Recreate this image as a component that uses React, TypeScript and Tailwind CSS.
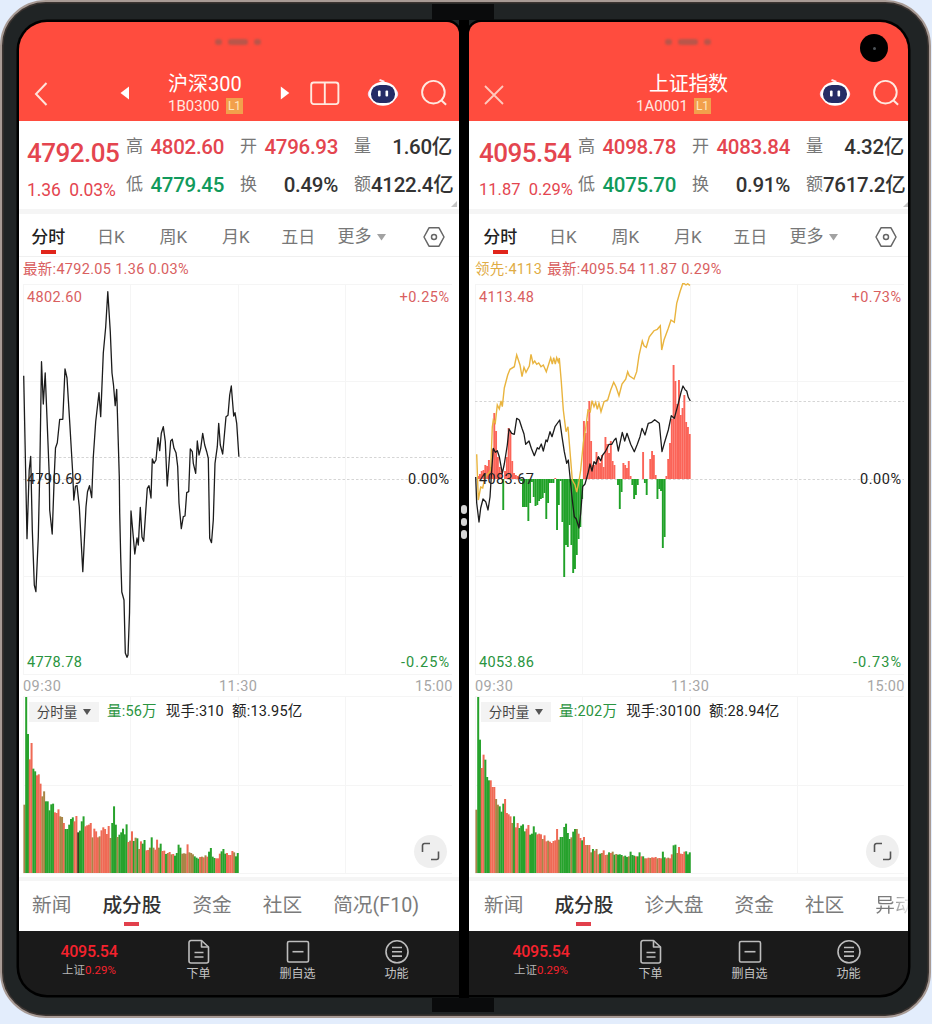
import type { FC, ReactNode } from "react";
import clsx from "clsx";

type Quote = {
  price: string;
  change: string;
  high: string;
  low: string;
  open: string;
  turnover: string;
  volume: string;
  amount: string;
};

type Series = {
  top: string;
  mid: string;
  bottom: string;
  percent: string;
  lastY: number;
  price: string;
  lead?: string;
  bars?: number[];
};

type Volume = { heights: number[]; colors: string };

// all chart data share one x axis: 24 (09:30) .. 452 (15:00)
const START_X = 23.4;
const STEP = 1.793;
const ZERO_Y = 479;

const csi: Series = {
  top: "4802.60",
  mid: "4790.69",
  bottom: "4778.78",
  percent: "0.25%",
  lastY: 457,
  price:
    "23.7,375.7 27,538.7 29.2,470 30.7,456.5 32.3,530 34.3,585 35.9,591.7 38.3,537 39.8,470 41.5,361.7 43.3,404 45.2,373 49.3,476 49.7,510 52.2,534 54.5,470 55.5,448 57.3,442.7 59.7,419.3 62.8,419.3 65,369 67,378 70,427 72.7,473 73.8,500 75.5,486 77,485.5 79.3,506.7 82.8,571.7 86,506.7 87.5,491.7 89.5,485.7 91.7,497.7 93.3,457 95.7,421.7 99,392.7 100.7,416.7 103.3,353 105.7,327 107.8,291.7 110.3,332 112,373 113.5,385 115.2,405.7 116.7,389.3 119.3,477 119.7,513 120.7,557 121.8,592 124,600 125.3,653 127,657.3 128,655 129.5,613 131,511 134.8,554 137,538 138.3,545 140.3,507.3 142,537 143.7,541.3 147.3,488.3 149,485.7 151,498 152.3,459 154,463.3 156,460 158,437.7 159.7,450.7 161.3,433.3 163.3,426.7 165.3,441.7 167.2,486 170.7,441 172.3,439.3 174,448.3 176,452.7 177.7,466.7 179,503 181.3,528.7 183.3,516.7 185,516 186.7,492.7 188.7,491.7 190.3,449 192.3,451.7 193.3,463.3 195.7,473.3 197.3,441 199,455 200.7,448.3 202.7,433.3 204.7,445 206.7,451.7 208.3,458.3 209.7,538.3 211.5,542.7 213.3,520 215,463.3 217.3,446.7 218.7,423.3 220.3,445 222.7,454 226,416.7 228,415.3 229.7,395 231.3,386 233.7,416 235,412.7 236.7,423.3 238.9,456.7",
};

const sse: Series = {
  top: "4113.48",
  mid: "4083.67",
  bottom: "4053.86",
  percent: "0.73%",
  lastY: 401,
  price:
    "23.7,477 24.7,503 27,522 28.7,508 31,499 33.7,501.7 36,510 38,497 39.7,470 41.3,448.3 43.3,452.3 45.3,450.7 47.3,456.7 50.3,473.3 52.3,464 55.3,445 57,429 59.7,433.3 62.3,434.3 64.7,418.3 67.3,420 70,428.3 72,434 73.7,444.3 77,441 79.3,448.3 82.3,455.7 85.3,447.7 87,449 89.3,444 91.3,451 94,440 95.3,441.7 98,431.7 100,436.7 103,426.7 107.7,420 110,436.7 112.3,451.7 114.7,463.3 116.3,460 118.3,480 120.3,500 122.3,516.7 124.3,519 127,528 128.7,513.3 130.7,486.7 133,484 136,473.3 138,464 140,471 142,461.7 144,464 146.3,456.7 148.7,460.7 150.7,455 153.3,451.7 157,444.3 159.7,444.3 162.3,440 164,438.3 166.3,451 170.3,432.3 172.7,441 175,433.3 178.7,444.3 182.3,451.7 185.3,444.3 188,436.7 190,428.3 193,435 196.3,423.3 199.7,422.3 202.7,419.7 207.3,423.3 210,451.7 212.3,443.3 216.3,430 219.3,415.7 222.3,418.3 226.3,403.3 229,392.3 231,386 233.3,390 234.7,391 236.3,397.3 238.3,401",
  lead: "24.7,454.3 26.3,500 28.7,487 30.7,488 33,477 36.7,473 38.7,470 40.3,427 41.3,420 43.3,423 45.3,405 47.3,409 49,401 50.3,406.7 52.3,388 55.7,375 58,369.3 62.3,366.7 64.7,355 68,365 70,376.7 72,367.3 74,372.3 77.3,366 79,354.3 81,363.3 82.7,361 84.7,364.3 86.7,363 89,366.7 91.3,365 94.3,371.7 98.7,357.7 100.3,364 101.7,357.7 103.3,364 104.7,357.7 106.3,362 107.3,358 109.3,381.7 111.3,410 114,431.7 116,426.7 118.7,460 120.3,480 123,485 124.7,492 126.7,483 128.7,470 131.3,443 133.7,428 136,410 138.3,411.7 140,400.7 142,406.7 143.7,402.3 145.3,409.3 147,403.3 149,411.7 152,401.7 155.7,400 158.7,390 161.7,382.3 164,386.7 167,395.7 170,384 173.7,379.3 175.7,371.7 177.3,375.7 182,379 184.7,371.7 187,355.7 190.3,341 192,345.7 194.3,347.3 197.3,336.7 202,330.7 205.3,329.3 208.3,325.7 209.7,350 212,340 216.3,328.3 219,320 222.3,322.3 224.7,303.3 228,291.7 230.7,283.8 232.3,283.8 234,285 235.7,283.8 238,285.3",
  bars: [
    0, 3, 5, 8, 9, 14, 13, 19, 12, 30, 66, 48, 22, 12, 8, -31, 8, 22, 51, 47,
    18, 6, 4, 3, 2, -2, -28, -28, -28, -42, -24, -3, -18, -27, -26, -22, -20,
    -19, -14, -40, -24, -4, -4, -4, 1, -51, -26, -2, -43, -98, -66, -68, -46,
    -66, -94, -90, -76, -60, -48, -20, 58, 46, 58, 78, 38, 14, 14, 27, 22, 16,
    24, 12, 42, 35, 26, 38, 18, 14, 0, -6, -30, -13, 16, 14, 11, 18, 3, -6,
    -20, -16, -6, 0, 0, 27, -4, -16, 0, 20, 28, 24, 4, -20, -10, -12, -69, -58,
    3, 20, 36, 60, 114, 98, 75, 99, 64, 71, 84, 57, 52, 45,
  ],
};

const csiVolume: Volume = {
  heights: [
    205, 530, 417, 341, 390, 313, 305, 293, 296, 268, 230, 245, 215, 215, 188,
    206, 208, 182, 180, 191, 170, 168, 150, 132, 132, 145, 162, 167, 155, 171,
    122, 127, 155, 170, 140, 143, 145, 150, 107, 133, 125, 107, 110, 128, 137,
    132, 117, 141, 105, 150, 200, 145, 108, 115, 122, 133, 116, 146, 93, 97,
    125, 96, 106, 104, 72, 95, 88, 99, 68, 69, 76, 107, 76, 70, 100, 76, 88,
    66, 67, 57, 60, 63, 56, 57, 52, 60, 85, 76, 58, 59, 58, 86, 62, 60, 56, 50,
    46, 43, 48, 49, 47, 53, 49, 64, 75, 49, 45, 44, 44, 58, 65, 72, 58, 60, 54,
    54, 66, 62, 50, 60,
  ],
  colors:
    "oggrrggrrroogggggrrroorgggggrrkgggrrrrorrrorrrrrogggogggggro" +
    "rgogorggrrogorrogrrgororggggooorooogggrororggggrrrgggrrrrogg" +
    "g",
};

const sseVolume: Volume = {
  heights: [
    190, 530, 400, 315, 355, 340, 288, 278, 278, 258, 258, 222, 205, 200, 184,
    208, 222, 180, 176, 170, 150, 170, 137, 150, 135, 142, 146, 125, 133, 144,
    115, 118, 140, 122, 116, 118, 116, 102, 113, 95, 97, 94, 90, 96, 98, 132,
    100, 108, 108, 138, 148, 120, 102, 107, 124, 132, 132, 118, 105, 98, 108,
    84, 84, 84, 62, 72, 67, 72, 56, 58, 60, 68, 54, 55, 62, 60, 64, 55, 57, 55,
    56, 54, 50, 52, 48, 50, 64, 54, 52, 50, 50, 62, 50, 50, 44, 44, 46, 45, 47,
    46, 48, 44, 45, 44, 64, 47, 44, 46, 44, 56, 83, 85, 60, 78, 58, 57, 64, 65,
    56, 62,
  ],
  colors:
    "oggrrgggrrroogggrrrrogrrggggrrggggrrrorrorrrrroggggggoggorrg" +
    "rrorogrorgorrogrogogggoggogggrggrgorrorrrorrggrorrggorrrrggg" +
    "g",
};

const barColors: Record<string, string> = {
  r: "#ef6a55",
  g: "#27a22c",
  o: "#a98547",
  k: "#38401f",
};

const csiQuote: Quote = {
  price: "4792.05",
  change: "1.36  0.03%",
  high: "4802.60",
  low: "4779.45",
  open: "4796.93",
  turnover: "0.49%",
  volume: "1.60亿",
  amount: "4122.4亿",
};

const sseQuote: Quote = {
  price: "4095.54",
  change: "11.87  0.29%",
  high: "4098.78",
  low: "4075.70",
  open: "4083.84",
  turnover: "0.91%",
  volume: "4.32亿",
  amount: "7617.2亿",
};

const RobotIcon = () => (
  <svg width="32" height="32" viewBox="0 0 32 32" fill="none">
    <path d="M12.500 2.800 16.500 4.500V7" stroke="#ffe4ea" strokeWidth="2" />
    <ellipse cx="16" cy="17" rx="15.200" ry="8.500" fill="#f3d3ea" />
    <ellipse cx="16" cy="16.800" rx="14" ry="12" fill="#fff" />
    <rect x="4" y="8" width="24" height="18" rx="8.800" fill="#252c66" />
    <rect x="11" y="13.500" width="2.600" height="6" rx="1" fill="#fff" />
    <rect x="18.500" y="13.500" width="2.600" height="6" rx="1" fill="#fff" />
  </svg>
);

const SearchIcon = () => (
  <svg width="28" height="28" viewBox="0 0 28 28" fill="none">
    <circle cx="13.4" cy="13.2" r="11.3" stroke="#ffe9e0" strokeWidth="1.9" />
    <path d="m21.3 21.2 4.8 4.6" stroke="#ffe9e0" strokeWidth="1.9" />
  </svg>
);

const StockCode: FC<{ code: string; className?: string }> = ({
  code,
  className,
}) => (
  <div
    className={clsx(
      "flex h-4 items-center gap-[6px] text-[15px] text-[#ffe9e2]",
      className,
    )}
  >
    <span className="w-[52px] whitespace-nowrap">{code}</span>
    <span className="flex h-[16px] w-[17px] items-center justify-center bg-[#f2a04c] text-[12px] text-[#ffe6c0]">
      L1
    </span>
  </div>
);

const StatusDots: FC<{ className: string }> = ({ className }) => (
  <div
    className={clsx(
      "flex h-[37px] items-center gap-[6px] pt-[2px] blur-[1px]",
      className,
    )}
  >
    <span className="h-[6px] w-[7px] rounded-full bg-[#b9564a]" />
    <span className="h-[6px] w-[20px] rounded-full bg-[#b9564a]" />
    <span className="h-[6px] w-[7px] rounded-full bg-[#b9564a]" />
  </div>
);

const CsiHeader = () => (
  <header className="h-[99px] bg-[#ff4c3e] text-white">
    <StatusDots className="ml-[198px]" />
    <div className="flex h-[68px] items-center">
      <svg className="ml-[16px]" width="16" height="26" viewBox="0 0 16 26">
        <path
          d="M13.500 3 3 14l10.500 11"
          fill="none"
          stroke="#ffe3da"
          strokeWidth="2"
        />
      </svg>
      <svg className="ml-[71px]" width="10" height="14" viewBox="0 0 10 14">
        <path d="M9 .5v13L.5 7z" fill="#fff" />
      </svg>
      <div className="ml-[38px] w-[76px]">
        <div className="h-[26px] text-[20px] leading-[25px] whitespace-nowrap">
          沪深300
        </div>
        <StockCode code="1B0300" />
      </div>
      <svg className="ml-[36px]" width="10" height="14" viewBox="0 0 10 14">
        <path d="M.8.5v13L9.300 7z" fill="#fff" />
      </svg>
      <svg
        className="ml-[20px]"
        width="30"
        height="26"
        viewBox="0 0 30 26"
        fill="none"
        stroke="#ffe9e0"
        strokeWidth="1.9"
      >
        <rect x="1.2" y="2.500" width="27.2" height="21.600" rx="2.500" />
        <path d="M14.800 2.500v21.600" />
      </svg>
      <div className="ml-[27px]">
        <RobotIcon />
      </div>
      <div className="ml-[21px]">
        <SearchIcon />
      </div>
    </div>
  </header>
);

const SseHeader = () => (
  <header className="h-[99px] bg-[#ff4c3e] text-white">
    <StatusDots className="ml-[196px]" />
    <div className="flex h-[68px] items-center">
      <svg
        className="mt-[3px] ml-[14px]"
        width="22"
        height="22"
        viewBox="0 0 22 22"
      >
        <path
          d="m2 2 18 18M20 2 2 20"
          fill="none"
          stroke="#ffc9bd"
          strokeWidth="1.800"
        />
      </svg>
      <div className="ml-[131px] w-[94px]">
        <div className="ml-[13px] h-[26px] text-[20px] leading-[25px] tracking-[-0.3px] whitespace-nowrap">
          上证指数
        </div>
        <StockCode code="1A0001" />
      </div>
      <div className="ml-[89px]">
        <RobotIcon />
      </div>
      <div className="ml-[21px]">
        <SearchIcon />
      </div>
    </div>
  </header>
);

const QuoteCell: FC<{
  label: string;
  value: string;
  color: string;
}> = ({ label, value, color }) => (
  <div className="flex h-[38px] items-center justify-between whitespace-nowrap">
    <span className="text-[17px] text-[#777]">{label}</span>
    <span
      className={clsx("text-[20.500px] font-medium tracking-[-0.3px]", color)}
    >
      {value}
    </span>
  </div>
);

const QuotePanel: FC<{ quote: Quote; changeClassName: string }> = ({
  quote,
  changeClassName,
}) => (
  <section className="relative flex h-[88px] bg-white pt-[7px] pl-[10px]">
    <div className="w-[99px] whitespace-nowrap text-[#e4454f]">
      <div className="h-[48px] text-[26px] leading-[50px] font-medium tracking-[-0.5px]">
        {quote.price}
      </div>
      <div
        className={clsx(
          "h-[28px] leading-[28px] whitespace-pre",
          changeClassName,
        )}
      >
        {quote.change}
      </div>
    </div>
    <div className="w-[98px]">
      <QuoteCell label="高" value={quote.high} color="text-[#e4454f]" />
      <QuoteCell label="低" value={quote.low} color="text-[#119a5c]" />
    </div>
    <div className="ml-[16px] w-[98px]">
      <QuoteCell label="开" value={quote.open} color="text-[#e4454f]" />
      <QuoteCell label="换" value={quote.turnover} color="text-[#333]" />
    </div>
    <div className="ml-[16px] w-[98px]">
      <QuoteCell label="量" value={quote.volume} color="text-[#333]" />
      <QuoteCell label="额" value={quote.amount} color="text-[#333]" />
    </div>
    <svg
      className="absolute right-[2px] bottom-[2px]"
      width="6"
      height="6"
      viewBox="0 0 6 6"
    >
      <path d="M6 0v6H0z" fill="#c4c4c4" />
    </svg>
  </section>
);

const periods = ["分时", "日K", "周K", "月K", "五日"];

const PeriodTabs = () => (
  <nav className="flex h-[48px] border-t-[5px] border-b border-t-[#f5f5f5] border-b-[#f0f0f0] bg-white text-[17px] text-[#777]">
    {periods.map((period, index) => (
      <div
        key={period}
        className={clsx(
          "flex w-[62.500px] flex-col items-center pt-[10px]",
          index === 0 && "font-medium text-[#222]",
        )}
      >
        <span className="leading-[26px]">{period}</span>
        {index === 0 && <span className="h-[4px] w-[15px] bg-[#e1251b]" />}
      </div>
    ))}
    <div className="ml-[8px] flex items-center gap-[5px] pt-[4px]">
      更多
      <svg width="9" height="7" viewBox="0 0 9 7">
        <path d="M0 0h9L4.500 6.500z" fill="#a2a2a2" />
      </svg>
    </div>
    <svg
      className="mt-[12px] ml-[36px]"
      width="24"
      height="22"
      viewBox="0 0 24 22"
      fill="none"
      stroke="#666"
      strokeWidth="1.500"
    >
      <path d="M7 1.800h10L22 11l-5 9.200H7L2 11z" strokeLinejoin="round" />
      <circle cx="12" cy="11" r="2.500" />
    </svg>
  </nav>
);

const Grid: FC<{ top: number; bottom: number; rows: number[] }> = ({
  top,
  bottom,
  rows,
}) => (
  <g stroke="#f5f5f5" strokeWidth="1">
    {[23.5, 130.5, 238.5, 345.5].map((x) => (
      <path key={x} d={`M${x} ${top}V${bottom}`} />
    ))}
    {rows.map((y) => (
      <path key={y} d={`M23 ${y}H452`} />
    ))}
  </g>
);

const PriceChart: FC<{ series: Series }> = ({ series }) => (
  <svg
    className="block"
    width="442"
    height="414"
    viewBox="17 283 442 414"
    fontSize="14.500"
  >
    <Grid top={284} bottom={674} rows={[284.5, 381.5, 576.5, 674.5, 696.5]} />
    <g stroke="#d5d5d5" strokeDasharray="2.5 2">
      <path d={`M23 ${series.lastY}.500H452`} />
      <path d={`M23 ${ZERO_Y}.500H452`} />
    </g>
    {series.bars?.map((value, i) => (
      <rect
        key={i}
        x={START_X + i * STEP}
        y={value > 0 ? ZERO_Y - value : ZERO_Y}
        width="1.900"
        height={Math.abs(value)}
        fill={value > 0 ? "#fb6458" : "#1fa127"}
      />
    ))}
    {series.lead && (
      <polyline
        points={series.lead}
        fill="none"
        stroke="#e9b43e"
        strokeWidth="1.400"
      />
    )}
    <polyline
      points={series.price}
      fill="none"
      stroke="#1c1c1c"
      strokeWidth="1.300"
      strokeLinejoin="round"
    />
    <g fill="#d9605f">
      <text x="27" y="301.500" textLength="55">
        {series.top}
      </text>
      <text x="399.500" y="301.500" textLength="49.500">
        +{series.percent}
      </text>
    </g>
    <g fill="#222">
      <text x="27" y="484" textLength="55">
        {series.mid}
      </text>
      <text x="408" y="484" textLength="41">
        0.00%
      </text>
    </g>
    <g fill="#2a9440">
      <text x="27" y="667" textLength="55">
        {series.bottom}
      </text>
      <text x="401" y="667" textLength="48">
        -{series.percent}
      </text>
    </g>
    <g fill="#a6a6a6">
      <text x="23" y="691" textLength="38">
        09:30
      </text>
      <text x="219" y="691" textLength="38">
        11:30
      </text>
      <text x="415" y="691" textLength="37.500">
        15:00
      </text>
    </g>
  </svg>
);

const VolumeChart: FC<{ volume: Volume; children: ReactNode }> = ({
  volume,
  children,
}) => (
  <section className="relative h-[180px] bg-white">
    <svg className="block" width="442" height="180" viewBox="17 697 442 180">
      <Grid top={697} bottom={873} rows={[785.5, 873.5]} />
      {volume.heights.map((height, i) => (
        <rect
          key={i}
          x={START_X + i * STEP}
          y={873 - height / 3}
          width="2"
          height={height / 3}
          fill={barColors[volume.colors[i]]}
        />
      ))}
    </svg>
    <div className="absolute top-[5px] left-[12px] flex h-[20px] items-center text-[14.500px] tracking-[0.2px] whitespace-nowrap text-[#222]">
      <span className="mr-[8px] flex h-[20px] w-[70px] items-center justify-center gap-[6px] bg-[#f3f3f3] text-[13.500px] tracking-normal text-[#444]">
        分时量
        <svg width="8" height="6" viewBox="0 0 8 6">
          <path d="M0 0h8L4 6z" fill="#555" />
        </svg>
      </span>
      {children}
    </div>
    <div className="absolute top-[138px] left-[397px] flex size-[33px] items-center justify-center rounded-full bg-[#efefef]">
      <svg
        width="19"
        height="19"
        viewBox="0 0 19 19"
        fill="none"
        stroke="#555"
        strokeWidth="1.600"
      >
        <path d="M1.500 10V3.500a2 2 0 0 1 2-2H9M17.500 9.500v6a2 2 0 0 1-2 2H10" />
      </svg>
    </div>
  </section>
);

const InfoTabs: FC<{ items: string[] }> = ({ items }) => (
  <nav className="flex h-[54px] gap-[31px] border-t-[4px] border-[#f5f5f5] bg-white pl-[15px] text-[19.700px] whitespace-nowrap text-[#7b7b7b]">
    {items.map((item, index) => (
      <div
        key={item}
        className={clsx(
          "flex flex-col items-center pt-[9px]",
          index === 1 && "font-medium text-[#333]",
          item === "异动" &&
            "bg-linear-to-r from-[#7b7b7b] from-40% to-[#eee] to-85% bg-clip-text text-transparent",
        )}
      >
        <span className="leading-[31px]">{item}</span>
        {index === 1 && (
          <span className="mt-[1px] h-[4px] w-[15px] bg-[#e2404c]" />
        )}
      </div>
    ))}
  </nav>
);

const ToolItem: FC<{ label: string; children: ReactNode }> = ({
  label,
  children,
}) => (
  <div className="flex flex-col items-center pt-[8px] text-[12px] text-[#c4c4c4]">
    <svg
      width="26"
      height="26"
      viewBox="0 0 26 26"
      fill="none"
      stroke="#bdbdbd"
      strokeWidth="1.600"
      strokeLinejoin="round"
    >
      {children}
    </svg>
    <span className="leading-[19px]">{label}</span>
  </div>
);

const Toolbar = () => (
  <footer className="grid h-[64px] grid-cols-[120px_99px_99px_99px] bg-[#1a1a1a] pl-[12px]">
    <div className="flex flex-col items-center pt-[10px] text-[#f5222d]">
      <span className="text-[16px] leading-[21px] font-medium tracking-[-0.3px]">
        4095.54
      </span>
      <span className="text-[11.500px] leading-[17px]">
        <span className="text-[#b5b5b5]">上证</span>0.29%
      </span>
    </div>
    <ToolItem label="下单">
      <path d="M5 1.500h10.500l7 6.500v14a2 2 0 0 1-2 2H5a2 2 0 0 1-2-2v-18.500a2 2 0 0 1 2-2z" />
      <path d="M15.500 1.500v6.500h7M8.500 13.500h9M8.500 18h9" />
    </ToolItem>
    <ToolItem label="删自选">
      <rect x="2.500" y="2.500" width="21" height="20.500" rx="1.500" />
      <path d="M7.500 12.700h11" />
    </ToolItem>
    <ToolItem label="功能">
      <circle cx="13" cy="12.800" r="11" />
      <path d="M8 8.500h10M8 12.800h10M8 17.100h10" />
    </ToolItem>
  </footer>
);

const Pane: FC<{
  header: ReactNode;
  quote: Quote;
  changeClassName: string;
  legend: ReactNode;
  series: Series;
  volume: Volume;
  volumeLegend: ReactNode;
  tabs: string[];
}> = ({
  header,
  quote,
  changeClassName,
  legend,
  series,
  volume,
  volumeLegend,
  tabs,
}) => (
  <div className="w-[442px]">
    {header}
    <QuotePanel quote={quote} changeClassName={changeClassName} />
    <PeriodTabs />
    <div className="flex h-[26px] items-center gap-[5px] bg-white pl-[6px] text-[14.500px] tracking-[0.300px] whitespace-nowrap text-[#d9605f]">
      {legend}
    </div>
    <div className="bg-white">
      <PriceChart series={series} />
    </div>
    <VolumeChart volume={volume}>{volumeLegend}</VolumeChart>
    <InfoTabs items={tabs} />
    <Toolbar />
  </div>
);

const Hinge: FC<{ className: string }> = ({ className }) => (
  <div
    className={clsx("absolute left-[432px] w-[62px] bg-[#0a0b0c]", className)}
  />
);

export default function App() {
  return (
    <div className="relative h-[1024px] w-[932px] overflow-hidden bg-[#e3edfc] font-[Roboto,'Noto_Sans_CJK_SC',sans-serif]">
      <div className="h-[1018px] w-[931px] rounded-[46px] border-2 border-[#a89b95] bg-[#202425] shadow-[inset_0_0_0_1.500px_#3b3431]">
        <div className="flex h-full gap-[10px] pt-[20px] pl-[17px]">
          <div className="h-[973px] w-[440px] overflow-hidden rounded-[28px] rounded-tr-[12px] rounded-br-none bg-black shadow-[0_0_0_2.500px_#000]">
            <div className="-ml-[2px]">
              <Pane
                header={<CsiHeader />}
                quote={csiQuote}
                changeClassName="text-[17.500px] tracking-[-0.1px]"
                legend={<span>最新:4792.05 1.36 0.03%</span>}
                series={csi}
                volume={csiVolume}
                volumeLegend={
                  <>
                    <span className="mr-[9px] text-[#2a9440]">量:56万</span>
                    <span className="mr-[8px]">现手:310</span>
                    <span>额:13.95亿</span>
                  </>
                }
                tabs={["新闻", "成分股", "资金", "社区", "简况(F10)"]}
              />
            </div>
          </div>
          <div className="h-[973px] w-[439px] overflow-hidden rounded-[28px] rounded-tl-[12px] rounded-bl-none bg-black shadow-[0_0_0_2.500px_#000]">
            <Pane
              header={<SseHeader />}
              quote={sseQuote}
              changeClassName="text-[16.500px]"
              legend={
                <>
                  <span className="text-[#dfac45]">领先:4113</span>
                  <span>最新:4095.54 11.87 0.29%</span>
                </>
              }
              series={sse}
              volume={sseVolume}
              volumeLegend={
                <>
                  <span className="mr-[9px] text-[#2a9440]">量:202万</span>
                  <span className="mr-[8px]">现手:30100</span>
                  <span>额:28.94亿</span>
                </>
              }
              tabs={["新闻", "成分股", "诊大盘", "资金", "社区", "异动"]}
            />
          </div>
        </div>
      </div>

      <Hinge className="top-[4px] h-[16px]" />
      <Hinge className="top-[998px] h-[14px]" />
      <div className="absolute top-[20px] left-[459px] flex h-[978px] w-[10px] flex-col items-center gap-[4px] bg-black pt-[485px]">
        <span className="h-[8.500px] w-[6px] rounded-full bg-[#d6d6d6]" />
        <span className="h-[8.500px] w-[6px] rounded-full bg-[#d6d6d6]" />
        <span className="h-[8.500px] w-[6px] rounded-full bg-[#d6d6d6]" />
      </div>
      <div className="absolute top-[34px] left-[860px] flex size-[28px] items-center justify-center rounded-full bg-black">
        <span className="size-[3px] rounded-full bg-[#4c5358]" />
      </div>
    </div>
  );
}
